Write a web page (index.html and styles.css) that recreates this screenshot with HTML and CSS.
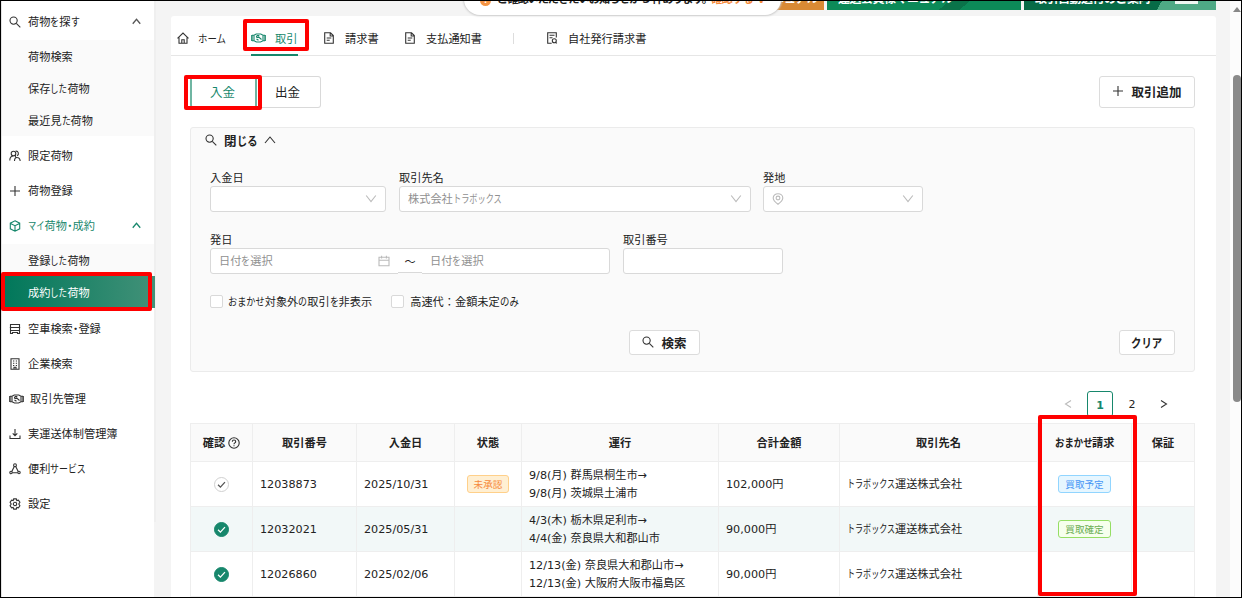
FILE: index.html
```
<!DOCTYPE html>
<html lang="ja">
<head>
<meta charset="utf-8">
<title>取引</title>
<link rel="stylesheet" href="styles.css">
</head>
<body>
<svg class="defs" width="0" height="0">
  <symbol id="search" viewBox="0 0 12 12"><circle cx="4.6" cy="4.6" r="3.6"/><path d="M7.3 7.3l4 4"/></symbol>
  <symbol id="up" viewBox="0 0 12 12"><path d="M1 9l5-6 5 6"/></symbol>
  <symbol id="down" viewBox="0 0 12 12"><path d="M1.200 2.500L6 8.500l4.800-6"/></symbol>
  <symbol id="plus" viewBox="0 0 12 12"><path d="M6 1v10M1 6h10"/></symbol>
  <symbol id="people" viewBox="0 0 12 12"><circle cx="4.500" cy="3.500" r="2.300"/><path d="M.8 10.500c0-3 1.600-4.500 3.700-4.500M6.500 1.200c3-.5 4 3.300 1.500 4.500M5.500 11c0-2.500 1-3.500 2.500-3.500s3 1.500 3.200 3.500M6.800 5.200c-1.200 1.300.2 2.800 1.700 2.200"/></symbol>
  <symbol id="cube" viewBox="0 0 12 12"><path d="M6 .8l4.700 2.400v5.600L6 11.200 1.300 8.800V3.200zM1.500 3.400L6 5.700l4.500-2.300M6 5.700V11"/></symbol>
  <symbol id="truck" viewBox="0 0 12 12"><path d="M1.500 7.500v-6h9v6M.8 4.500h10.400M1.500 7.500h9v3h-2v-1h-5v1h-2z"/></symbol>
  <symbol id="building" viewBox="0 0 12 12"><path d="M2 .8h8v10.400H2zM4 3h1.300M6.800 3H8M4 5.300h1.300M6.800 5.300H8M4 7.500h1.300M6.800 7.500H8M5 11V9.300h2V11"/></symbol>
  <symbol id="hands" viewBox="0 0 15 10"><path d="M.9 2v6M14.100 2v6" stroke-width="1.500"/><path d="M1 2.200h2L5.200 1h4.600L12 2.200h2M1 7.800h2L5.500 9h4L12 7.800h2M3 2.300v5.400M12 2.300v5.400M8.300 2.600H6.200c-1.200 1.200-.8 2.200.6 1.800l1-.3L10.500 6.500M5.500 6l2 1.300"/></symbol>
  <symbol id="download" viewBox="0 0 12 12"><path d="M6 1v6.500M3.700 5.300L6 7.600l2.300-2.300M1 7.500v3h10v-3"/></symbol>
  <symbol id="nodes" viewBox="0 0 12 12"><circle cx="6" cy="2.200" r="1.400"/><circle cx="2" cy="9.500" r="1.200"/><circle cx="10" cy="9.500" r="1.200"/><path d="M5.300 3.500L2.800 8.400M6.700 3.500l2.500 4.900M3.300 9.700h5.400"/></symbol>
  <symbol id="gear" viewBox="0 0 12 12"><path d="M4.700.9h2.600l.5 1.600 1.600-.3 1.500 2.100L9.800 6l1.100 1.700-1.500 2.100-1.600-.3-.5 1.600H4.700l-.5-1.600-1.600.3-1.500-2.100L2.200 6 1.100 4.300l1.500-2.100 1.600.3z"/><circle cx="6" cy="6" r="1.700"/></symbol>
  <symbol id="home" viewBox="0 0 12 12"><path d="M.5 6.300L6 1l5.500 5.300M2 5.500v5.700h8V5.500M4.800 11V7.700h2.400V11"/></symbol>
  <symbol id="doc" viewBox="0 0 12 12"><path d="M1.700.8h5.800l2.800 2.800v7.600H1.700zM7.200 1v3h3M3.700 6h4.600M3.700 8.300h3"/></symbol>
  <symbol id="docset" viewBox="0 0 12 12"><path d="M10.300 5.500V.8H1.700v10.400h4M3.500 3.300h5M3.500 5.700h3"/><circle cx="8.300" cy="8.800" r="2"/><path d="M9.700 10.300l1.100 1"/></symbol>
  <symbol id="cal" viewBox="0 0 12 12"><path d="M1 2.200h10v8.500H1zM1 5.300h10M3.600.8v2.600M8.400.8v2.600"/></symbol>
  <symbol id="pin" viewBox="0 0 12 12"><path d="M6 11.300C3 9 1.200 7.500 1.200 5a4.800 4.300 0 0 1 9.600 0c0 2.500-1.800 4-4.800 6.300z"/><circle cx="6" cy="5" r="1.900"/></symbol>
  <symbol id="help" viewBox="0 0 12 12"><circle cx="6" cy="6" r="5.200"/><path d="M4.300 4.700c0-2.200 3.400-2.200 3.400 0C7.700 6 6 5.800 6 7.200M6 8.200v1"/></symbol>
  <symbol id="check" viewBox="0 0 12 12"><path d="M2.800 6.200l2.200 2.200 4.200-4.600"/></symbol>
</svg>

<div class="app">
  <nav class="side">
    <a class="item"><svg class="ic"><use href="#search"/></svg><span>荷物<b class="k" style="--n:1">を</b>探<b class="k" style="--n:1">す</b></span><svg class="fold" viewBox="0 0 12 12"><use href="#up"/></svg></a>
    <div class="sub">
      <a>荷物検索</a>
      <a>保存<b class="k" style="--n:2;--s:.76">した</b>荷物</a>
      <a>最近見<b class="k" style="--n:1;--s:.8">た</b>荷物</a>
    </div>
    <a class="item"><svg class="ic"><use href="#people"/></svg><span>限定荷物</span></a>
    <a class="item"><svg class="ic"><use href="#plus"/></svg><span>荷物登録</span></a>
    <a class="item on"><svg class="ic"><use href="#cube"/></svg><span><b class="k" style="--n:2;--s:.74">マイ</b>荷物<b class="mid">・</b>成約</span><svg class="fold" viewBox="0 0 12 12"><use href="#up"/></svg></a>
    <div class="sub last">
      <a>登録<b class="k" style="--n:2;--s:.76">した</b>荷物</a>
      <a class="current">成約<b class="k" style="--n:2;--s:.76">した</b>荷物</a>
    </div>
    <a class="item"><svg class="ic"><use href="#truck"/></svg><span>空車検索<b class="mid">・</b>登録</span></a>
    <a class="item"><svg class="ic"><use href="#building"/></svg><span>企業検索</span></a>
    <a class="item"><svg class="ic wide"><use href="#hands"/></svg><span>取引先管理</span></a>
    <a class="item"><svg class="ic"><use href="#download"/></svg><span>実運送体制管理簿</span></a>
    <a class="item"><svg class="ic"><use href="#nodes"/></svg><span>便利<b class="k" style="--n:4;--s:.8">サービス</b></span></a>
    <a class="item"><svg class="ic"><use href="#gear"/></svg><span>設定</span></a>
  </nav>
  <div class="side-scroll"></div>

  <main class="main">
    <div class="banners">
      <div class="ban orange"><span>マニュアル</span></div>
      <div class="ban green"><span>運送会員様マニュアル</span></div>
      <div class="ban deep"><span>取引自動送付のご案内</span><i></i></div>
    </div>
    <div class="notice"><em>!</em><strong>ご確認いただきたいお知らせが 5 件あります。</strong><a>確認する ∨</a></div>

    <section class="card">
      <div class="tabs">
        <a class="t-home"><svg class="ic"><use href="#home"/></svg><span><b class="k" style="--n:3;--s:.84">ホーム</b></span></a>
        <a class="t-deal on"><svg class="ic wide"><use href="#hands"/></svg><span>取引</span></a>
        <a class="t-bill"><svg class="ic"><use href="#doc"/></svg><span>請求書</span></a>
        <a class="t-pay"><svg class="ic"><use href="#doc"/></svg><span>支払通知書</span></a>
        <i class="sep"></i>
        <a class="t-own"><svg class="ic"><use href="#docset"/></svg><span>自社発行請求書</span></a>
      </div>

      <div class="content">
        <div class="toolbar">
          <div class="seg"><button class="on">入金</button><button>出金</button></div>
          <button class="btn add"><svg class="ic"><use href="#plus"/></svg>取引追加</button>
        </div>

        <form class="panel">
          <div class="head"><svg class="ic"><use href="#search"/></svg><span>閉<b class="k" style="--n:2;--s:.82">じる</b></span><svg class="ic"><use href="#up"/></svg></div>
          <div class="row">
            <label class="w176">入金日<div class="box end"><svg class="ic g"><use href="#down"/></svg></div></label>
            <label class="w352">取引先名<div class="box"><span>株式会社<b class="k" style="--n:6;--s:.73">トラボックス</b></span><svg class="ic g"><use href="#down"/></svg></div></label>
            <label class="w160">発地<div class="box"><svg class="ic g"><use href="#pin"/></svg><svg class="ic g"><use href="#down"/></svg></div></label>
          </div>
          <div class="row second">
            <label class="w400">発日<div class="box range"><span>日付<b class="k" style="--n:1">を</b>選択</span><svg class="ic g"><use href="#cal"/></svg><i>～</i><span>日付<b class="k" style="--n:1">を</b>選択</span></div></label>
            <label class="w160">取引番号<div class="box"></div></label>
          </div>
          <div class="checks">
            <label><i></i><span><b class="k" style="--n:4;--s:.82">おまかせ</b>対象外<b class="k" style="--n:1">の</b>取引<b class="k" style="--n:1">を</b>非表示</span></label>
            <label><i></i><span>高速代：金額未定<b class="k" style="--n:2;--s:.84">のみ</b></span></label>
          </div>
          <div class="actions">
            <span></span>
            <button type="button" class="btn find"><svg class="ic"><use href="#search"/></svg>検索</button>
            <button type="button" class="btn clear"><b class="k" style="--n:3;--s:.83">クリア</b></button>
          </div>
        </form>

        <div class="pager"><svg class="ic g"><path d="M9 2.500L3.500 6 9 9.500"/></svg><a class="on">1</a><a>2</a><svg class="ic"><path d="M3 2.500L8.500 6 3 9.500"/></svg></div>

        <table>
          <colgroup><col style="width:62px"><col style="width:104px"><col style="width:98px"><col style="width:67px"><col style="width:197px"><col style="width:121px"><col style="width:198px"><col style="width:94px"><col style="width:63px"></colgroup>
          <thead><tr><th>確認<svg class="ic q"><use href="#help"/></svg></th><th>取引番号</th><th>入金日</th><th>状態</th><th>運行</th><th>合計金額</th><th>取引先名</th><th><b class="k" style="--n:4;--s:.84">おまかせ</b>請求</th><th>保証</th></tr></thead>
          <tbody>
            <tr><td class="c"><svg class="dot" viewBox="0 0 12 12"><use href="#check"/></svg></td><td>12038873</td><td>2025/10/31</td><td class="c"><span class="tag wait">未承認</span></td><td>9/8(月) 群馬県桐生市→<br>9/8(月) 茨城県土浦市</td><td>102,000円</td><td><b class="k" style="--n:6;--s:.72">トラボックス</b>運送株式会社</td><td class="c"><span class="tag plan">買取予定</span></td><td></td></tr>
            <tr class="alt"><td class="c"><svg class="dot done" viewBox="0 0 12 12"><use href="#check"/></svg></td><td>12032021</td><td>2025/05/31</td><td></td><td>4/3(木) 栃木県足利市→<br>4/4(金) 奈良県大和郡山市</td><td>90,000円</td><td><b class="k" style="--n:6;--s:.72">トラボックス</b>運送株式会社</td><td class="c"><span class="tag fixed">買取確定</span></td><td></td></tr>
            <tr><td class="c"><svg class="dot done" viewBox="0 0 12 12"><use href="#check"/></svg></td><td>12026860</td><td>2025/02/06</td><td></td><td>12/13(金) 奈良県大和郡山市→<br>12/13(金) 大阪府大阪市福島区</td><td>90,000円</td><td><b class="k" style="--n:6;--s:.72">トラボックス</b>運送株式会社</td><td></td><td></td></tr>
          </tbody>
        </table>
      </div>
    </section>
  </main>
  <div class="scrollbar"><i></i><b></b></div>

  <div class="mark m-side"></div>
  <div class="mark m-tab"></div>
  <div class="mark m-seg"></div>
  <div class="mark m-col"></div>
  <div class="frame"></div>
</div>
</body>
</html>
```
FILE: styles.css
```
* { box-sizing: border-box; }
body { margin: 0; font-family: "DejaVu Sans", "Noto Sans CJK JP", sans-serif; font-size: 11.2px; color: #222; }
button { font: inherit; color: inherit; padding: 0; }
.defs { position: absolute; }
.app { position: relative; display: flex; width: 1242px; height: 598px; overflow: hidden; background: #f4f4f4; }

/* Condensed kana: --n is the number of characters, --s the horizontal scale. */
.k { --s: .8; display: inline-block; font-weight: inherit; white-space: nowrap; transform: scaleX(var(--s)); transform-origin: 0 50%; margin-right: calc(var(--n) * (var(--s) - 1) * 1em); }
.mid { font-weight: inherit; margin: 0 -.25em; }

.ic { width: 12px; height: 12px; flex: none; fill: none; stroke: #333; stroke-width: 1.1; }
.ic.wide { width: 15px; height: 10px; }
.ic.g { stroke: #bbb; }

.side { width: 154px; flex: none; padding-top: 4px; background: #fff; border-left: 2px solid #e4e4e4; }
.item { display: flex; align-items: center; height: 35px; padding-left: 7px; line-height: 35px; }
.item span { height: 35px; line-height: 37px; }
.item .ic { margin-right: 7px; }
.item .ic.wide { margin-right: 6px; }
.item.on { color: #17876c; }
.item.on svg { stroke: #17876c; }
.fold { width: 9px; height: 9px; margin-left: auto; margin-right: 13px; fill: none; stroke: #555; stroke-width: 1.700; }
.sub { background: #fafafa; margin: 1px 0 2px; }
.sub.last { margin-bottom: 3px; }
.sub a { display: block; height: 32px; line-height: 35px; padding-left: 26px; }
.sub .current { width: 153px; position: relative; color: #fff; background: linear-gradient(90deg, #00775a, #429178); }
.side-scroll { width: 2px; height: 522px; flex: none; background: #efefef; }

.main { position: relative; width: 1074px; height: 598px; flex: none; padding: 0 14px 0 15px; }
.banners { display: flex; gap: 3px; height: 10px; margin-bottom: 6px; padding-left: 590px; overflow: hidden; color: #fff; font-weight: bold; width: 1046px; }
.ban { position: relative; height: 10px; flex: none; overflow: hidden; line-height: 16px; }
.ban span { display: block; margin-top: -9px; padding-left: 11px; font-size: 12px; white-space: nowrap; letter-spacing: -.5px; }
.orange { width: 63px; background: #d98a34; }
.orange span { padding-left: 0; }
.green { width: 194px; background: linear-gradient(140deg, #0c8a58 60%, #0a7349 60% 70%, #0c8a58 70%); }
.deep { width: 192px; background: linear-gradient(120deg, #076b47 70%, #4ea985 70%); }
.deep i { position: absolute; right: 18px; top: 0; width: 23px; height: 4px; background: #eef6f2; }
.notice { position: absolute; z-index: 1; left: 308px; top: -17px; width: 317px; height: 32px; padding-left: 16px; display: flex; align-items: center; line-height: 32px; background: #fff; border-radius: 16px; box-shadow: 0 0 2px 1px #ccc; white-space: nowrap; }
.notice em { width: 11px; height: 11px; margin: 3px 6px 0 0; border-radius: 50%; background: #f49342; color: #fff; line-height: 11px; text-align: center; font-style: normal; font-weight: bold; font-size: 8px; }
.notice strong { letter-spacing: -1px; width: 214px; padding-top: 2px; }
.notice a { color: #f68a3c; font-weight: bold; letter-spacing: -.6px; padding-top: 2px; }

.card { width: 1045px; height: 582px; background: #fff; border-radius: 3px 3px 0 0; }
.tabs { display: flex; height: 40px; border-bottom: 1px solid #e6e6e6; padding: 0 6px; }
.tabs a { display: flex; align-items: center; gap: 9px; height: 40px; padding-top: 3px; white-space: nowrap; }
.t-home { width: 74px; }
.t-deal { width: 47px; margin-right: 25px; color: #17876c; border-bottom: 2px solid #17876c; }
.tabs .t-deal { padding-top: 5px; }
.t-deal svg { stroke: #17876c; }
.t-bill { width: 81px; }
.tabs .t-bill, .tabs .t-pay, .tabs .t-own { gap: 10px; }
.t-pay { width: 109px; }
.sep { width: 1px; height: 11px; margin: 17px 32px 0 0; background: #ddd; }

.content { padding: 20px 21px 0 19px; }
.toolbar { display: flex; justify-content: space-between; height: 32px; }
.seg { display: flex; font-size: 12.500px; }
.seg button { width: 64px; height: 32px; padding: 0 2px 2px 0; background: #fff; border: 1px solid #d9d9d9; border-left: 0; border-radius: 0 3px 3px 0; }
.seg .on { width: 67px; padding: 0 2px 2px 0; color: #17876c; border: 1px solid #6fb5a2; border-width: 1px 2px; border-radius: 3px 0 0 3px; }
.btn { display: flex; align-items: center; justify-content: center; gap: 7px; padding-bottom: 1px; background: #fff; border: 1px solid #dcdcdc; border-radius: 3px; font-size: 12.500px; font-weight: bold; }
.add { width: 96px; height: 32px; padding-bottom: 2px; }

.panel { height: 245px; margin-top: 19px; padding: 5px 19px 0; background: #fafafa; border: 1px solid #ebebeb; border-radius: 3px; }
.head { display: flex; align-items: center; gap: 7px; height: 14px; margin-left: -5px; font-size: 12.500px; font-weight: bold; }
.row { display: flex; gap: 13px; margin-top: 23px; }
.row label { flex: none; height: 42px; line-height: 18px; }
.row.second { margin-top: 20px; }
.w176 { width: 176px; }
.w352 { width: 352px; margin-right: -1px; }
.w160 { width: 160px; }
.w400 { width: 400px; }
.box { display: flex; align-items: center; justify-content: space-between; height: 26px; margin-top: -2px; padding: 0 8px; background: #fff; border: 1px solid #d9d9d9; border-radius: 3px; color: #909090; }
.box span { padding-top: 2px; }
.box.end { justify-content: flex-end; }
.range { justify-content: flex-start; }
.range span { width: 159px; }
.range i { width: 24px; height: 24px; margin: 0 8px; border-bottom: 1px solid #d9d9d9; box-shadow: 0 2px #fafafa; color: #222; font-style: normal; text-align: center; line-height: 27px; }
.checks { display: flex; gap: 19px; margin-top: 20px; height: 15px; line-height: 15px; }
.checks label { display: flex; align-items: center; gap: 5px; }
.checks span { padding-top: 2px; }
.checks label + label { gap: 6px; }
.checks i { width: 13px; height: 13px; background: #fff; border: 1px solid #d9d9d9; border-radius: 2px; }
.actions { display: grid; grid-template-columns: 419px 71px 56px; margin-top: 21px; }
.actions .btn { height: 25px; }
.clear { width: 56px; margin-left: 419px; }

.pager { display: flex; justify-content: flex-end; align-items: center; height: 26px; margin-top: 19px; padding-right: 25px; font-size: 11px; }
.pager a { width: 26px; height: 26px; line-height: 28px; text-align: center; }
.pager a.on { margin: 0 6px 0 13px; line-height: 27px; color: #17876c; font-weight: bold; border: 1px solid #17876c; border-radius: 3px; }
.pager a + svg { margin-left: 13px; }

table { width: 1005px; margin-top: 6px; border-collapse: separate; border-spacing: 0; table-layout: fixed; border-left: 1px solid #eee; border-top: 1px solid #eee; }
th, td { border-right: 1px solid #eee; border-bottom: 1px solid #eee; padding: 0 7px; white-space: nowrap; }
th { height: 38px; padding: 0 0 2px; background: #fafafa; }
td { height: 45px; padding-top: 2px; line-height: 18px; text-align: left; }
td.c { text-align: center; padding: 0; }
.alt td { background: #f2f8f8; }
.q { margin: 0 0 -2px 3px; }
.dot { display: block; width: 15px; height: 15px; margin: 1px auto 0; border: 1px solid #d0d0d0; border-radius: 50%; fill: none; stroke: #555; stroke-width: 1.200; }
.dot.done { background: #17876c; border-color: #17876c; stroke: #fff; }
.tag { display: inline-block; height: 18px; line-height: 17px; padding: 0 6px; border: 1px solid; border-radius: 3px; font-size: 9.600px; vertical-align: middle; }
.wait { color: #f68a3c; background: #ffefd2; border-color: #ffd08a; }
.plan { color: #4896f5; background: #e6f6ff; border-color: #91d5ff; }
.fixed { color: #6cae55; background: #f6ffed; border-color: #95de64; }

.scrollbar { position: relative; width: 12px; flex: none; background: #fcfcfc; }
.scrollbar i { position: absolute; left: 3px; top: 7px; border: 4px solid transparent; border-top: 0; border-bottom: 5px solid #888; }
.scrollbar b { position: absolute; left: 3px; top: 75px; width: 8px; height: 327px; border-radius: 4px; background: #8a8a8a; }

/* Callout rectangles laid over the screen. */
.mark { position: absolute; z-index: 3; border: 4px solid #f00; border-radius: 2px; }
.m-side { left: 1px; top: 272px; width: 151px; height: 39px; }
.m-tab { left: 243px; top: 19px; width: 66px; height: 32px; }
.m-seg { left: 184px; top: 75px; width: 78px; height: 35px; }
.m-col { left: 1038px; top: 415px; width: 99px; height: 181px; }
.frame { position: absolute; z-index: 4; inset: 0; border: 1px solid #000; pointer-events: none; }
```
